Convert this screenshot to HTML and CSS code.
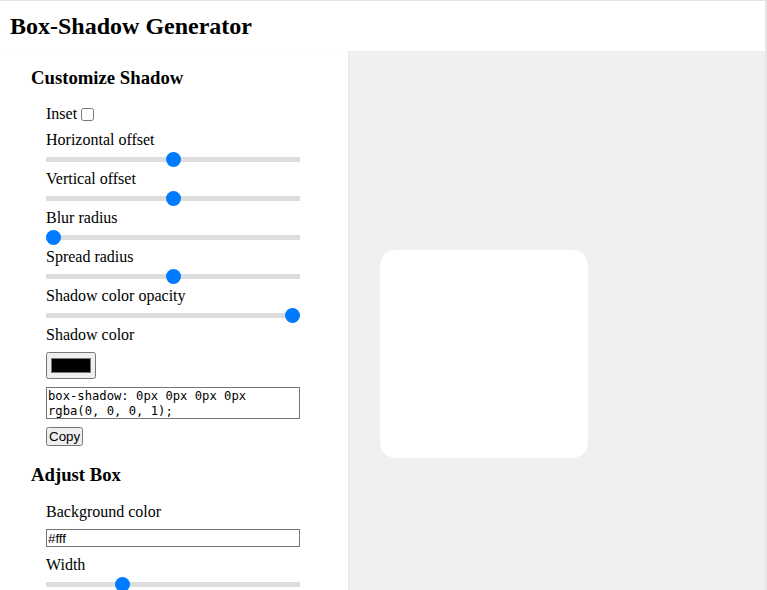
FILE: index.html
```html
<!DOCTYPE html>
<html>
<head>
<meta charset="utf-8">
<title>Box-Shadow Generator</title>
<link rel="stylesheet" href="styles.css">
</head>
<body>
<div class="page">
  <header class="header">
    <h1 class="title">Box-Shadow Generator</h1>
  </header>
  <main class="main">
    <section class="controls">
      <h3 class="section-title">Customize Shadow</h3>
      <div class="fields">
        <div class="inset-row">Inset <input type="checkbox" class="check"></div>
        <div class="group">
          <label class="label">Horizontal offset</label>
          <input type="range" class="range" min="-50" max="50" value="0">
        </div>
        <div class="group">
          <label class="label">Vertical offset</label>
          <input type="range" class="range" min="-50" max="50" value="0">
        </div>
        <div class="group">
          <label class="label">Blur radius</label>
          <input type="range" class="range" min="0" max="100" value="0">
        </div>
        <div class="group">
          <label class="label">Spread radius</label>
          <input type="range" class="range" min="-50" max="50" value="0">
        </div>
        <div class="group">
          <label class="label">Shadow color opacity</label>
          <input type="range" class="range" min="0" max="1" step="0.01" value="1">
        </div>
        <label class="label">Shadow color</label>
        <input type="color" class="color" value="#000000">
        <textarea class="code" rows="2" readonly>box-shadow: 0px 0px 0px 0px rgba(0, 0, 0, 1);</textarea>
        <button class="copy">Copy</button>
      </div>
      <h3 class="section-title second">Adjust Box</h3>
      <div class="fields">
        <label class="label">Background color</label>
        <input type="text" class="text" value="#fff">
        <div class="group width-group">
          <label class="label">Width</label>
          <input type="range" class="range" min="50" max="500" value="180">
        </div>
      </div>
    </section>
    <section class="preview">
      <div class="box"></div>
    </section>
  </main>
</div>
</body>
</html>
```
FILE: styles.css
```css
html, body {
  margin: 0;
  padding: 0;
  height: 100%;
  overflow: hidden;
  background: #fff;
}
body {
  font-family: "Liberation Serif", "Times New Roman", serif;
  font-size: 16px;
  color: #000;
}
.page {
  border-top: 1px solid #e3e3e3;
  border-right: 2px solid #e6e6e6;
  height: 100%;
  box-sizing: border-box;
  display: flex;
  flex-direction: column;
}
.header {
  padding: 11px 10px;
  background: #fff;
  box-shadow: 0 1px 1px rgba(0,0,0,0.02);
  position: relative;
  z-index: 1;
}
.title {
  margin: 0;
  font-size: 24px;
  line-height: 28px;
  font-weight: bold;
}
.main {
  display: flex;
  flex: 1;
  min-height: 0;
}
.controls {
  width: 348px;
  flex: none;
  box-sizing: border-box;
  padding: 16px 0 0 31px;
  background: #fff;
}
.section-title {
  margin: 0 0 16px;
  font-size: 18.72px;
  line-height: 22px;
  font-weight: bold;
}
.section-title.second {
  margin-top: 18px;
  margin-bottom: 17px;
}
.fields {
  padding-left: 15px;
  display: flex;
  flex-direction: column;
  align-items: flex-start;
}
.inset-row {
  line-height: 18px;
  margin-bottom: 8px;
  display: flex;
  align-items: center;
}
.check {
  margin: 0 0 0 4px;
  width: 13px;
  height: 13px;
}
.group {
  display: flex;
  flex-direction: column;
}
.label {
  display: block;
  line-height: 18px;
}
.range {
  -webkit-appearance: none;
  appearance: none;
  width: 254px;
  height: 5px;
  margin: 8px 0;
  padding: 0;
  background: #dddddd;
  outline: none;
  border: none;
}
.range::-webkit-slider-thumb {
  -webkit-appearance: none;
  appearance: none;
  width: 15px;
  height: 15px;
  border-radius: 50%;
  background: #007bff;
  border: none;
  cursor: pointer;
}
.color {
  margin: 8px 0 0;
  width: 50px;
  height: 27px;
}
.code {
  margin: 8px 0 0;
  width: 254px;
  height: 32px;
  box-sizing: border-box;
  padding: 1px 1px;
  font-family: "DejaVu Sans Mono", monospace;
  font-size: 12.2px;
  line-height: 15px;
  border: 1px solid #767676;
  resize: none;
  overflow: hidden;
}
.copy {
  margin: 8px 0 0;
  font-family: "Liberation Sans", Arial, sans-serif;
  font-size: 13.33px;
  height: 19px;
  padding: 0 1px;
  line-height: 15px;
}
.text {
  margin: 8px 0 0;
  width: 254px;
  height: 18px;
  box-sizing: border-box;
  padding: 0 1px;
  font-family: "Liberation Sans", Arial, sans-serif;
  font-size: 13.33px;
  border: 1px solid #767676;
}
.width-group {
  margin-top: 9px;
}
.preview {
  flex: 1;
  background: #f0f0f0;
  padding: 199px 32px 0;
  box-shadow: inset 1px 0 1px rgba(0,0,0,0.03);
}
.box {
  width: 208px;
  height: 208px;
  background: #fff;
  border-radius: 15px;
  box-shadow: 0 0 1px rgba(0,0,0,0.06);
}
```
